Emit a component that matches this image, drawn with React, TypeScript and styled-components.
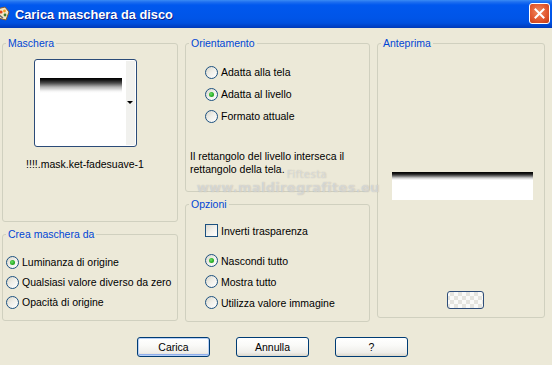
import React from 'react';
import styled, { createGlobalStyle } from 'styled-components';

const GlobalStyle = createGlobalStyle`
  html, body { margin: 0; padding: 0; }
  body {
    width: 552px; height: 365px; overflow: hidden; background: #ECE9D8;
    font-family: "Liberation Sans", Arial, sans-serif; font-size: 10.5px; color: #000;
  }
`;

const Window = styled.div`
  position: relative;
  width: 552px; height: 365px; overflow: hidden;
  display: flex; flex-direction: column;
  background: #ECE9D8;
`;

const TitleBar = styled.div`
  flex: none; height: 28px;
  display: flex; align-items: center;
  background: linear-gradient(180deg, #3A8CF5 0px, #1E6FF0 2px, #0058EE 5px, #0055E8 18px, #0050DF 23px, #0042C8 26px, #003AB8 28px);
`;

const TitleIcon = styled.svg`
  flex: none; width: 16px; height: 16px; margin-left: -5px;
`;

const TitleText = styled.span`
  margin-left: 4px;
  font-family: "Liberation Sans", Arial, sans-serif;
  font-weight: bold; font-size: 12.8px; color: #fff;
  text-shadow: 1px 1px 0 #0A1E8C;
`;

const CloseButton = styled.div`
  flex: none; margin-left: auto; margin-right: 2px; margin-top: -1px;
  width: 19px; height: 19px; border: 1px solid #fff; border-radius: 3px;
  background: radial-gradient(circle at 45% 40%, #F08A60 0%, #E2582F 55%, #C23A14 100%);
  display: flex; align-items: center; justify-content: center;
`;

const Body = styled.div`
  flex: 1;
  display: flex; flex-direction: column;
  padding: 9px 0 0 2px;
`;

const Columns = styled.div`
  display: grid;
  grid-template-columns: 176px 185px 168px;
  column-gap: 7px;
  align-items: start;
`;

const Column = styled.div`
  display: flex; flex-direction: column; gap: 6px;
`;

const Group = styled.fieldset<{ $h: number }>`
  margin: 0; padding: 0; min-width: 0;
  height: ${p => p.$h}px; box-sizing: border-box;
  border: 1px solid #D0D0BF; border-radius: 3px;
  display: flex; flex-direction: column;
`;

const Legend = styled.legend`
  margin-left: 3px; padding: 0 2px;
  line-height: 12px; font-size: 10.5px; color: #0046D5;
`;

const MaskContent = styled.div`
  display: flex; flex-direction: column; align-items: center;
  padding: 10px 10px 0 0;
`;

const Thumb = styled.div`
  width: 101px; height: 86px;
  border: 1px solid #2B4B78; border-radius: 3px;
  background: #fff;
  display: flex; align-items: flex-start;
`;

const ThumbImage = styled.div`
  flex: 1; display: flex; padding: 18px 4px 0 5px;
`;

const Fade = styled.div<{ $h: number }>`
  flex: 1; height: ${p => p.$h}px;
  background: linear-gradient(180deg, #000 0px, #141414 2px, #4a4a4a 5px, #b4b4b4 9px, #f4f4f4 13px, #fff 100%);
`;

const ThumbStrip = styled.div`
  flex: none; width: 9px; height: 84px; margin: 1px 1px 0 0;
  background: #F1F1EE;
  display: flex; align-items: flex-start; justify-content: center;
  padding-top: 40px; box-sizing: border-box;
`;

const Arrow = styled.div`
  width: 0; height: 0;
  border-left: 3px solid transparent; border-right: 3px solid transparent;
  border-top: 3px solid #000;
`;

const MaskName = styled.div`
  margin-top: 11px; line-height: 12px;
`;

const Options = styled.div<{ $pt: number; $pl: number }>`
  display: flex; flex-direction: column;
  padding: ${p => p.$pt}px 0 0 ${p => p.$pl}px;
`;

const Row = styled.div<{ $h: number }>`
  height: ${p => p.$h}px;
  display: flex; align-items: center; gap: 3px;
  white-space: nowrap;
`;

const Radio = styled.span<{ $on?: boolean }>`
  flex: none; width: 11px; height: 11px; border-radius: 50%;
  border: 1px solid #1C5180;
  background: linear-gradient(135deg, #D8D5C9 0%, #EFEEE8 45%, #FFFFFF 100%);
  display: flex; align-items: center; justify-content: center;
  &::after {
    content: "";
    display: ${p => (p.$on ? 'block' : 'none')};
    width: 5px; height: 5px; border-radius: 50%;
    background: radial-gradient(circle at 40% 40%, #6FE06A 0%, #2DB22A 50%, #178A15 100%);
  }
`;

const Check = styled.span`
  flex: none; width: 11px; height: 11px;
  border: 1px solid #1C5180;
  background: linear-gradient(135deg, #DCDAD0 0%, #F2F1EC 50%, #FFFFFF 100%);
`;

const Note = styled.div`
  margin: 23px 0 0 4px; line-height: 13px;
`;

const Spacer = styled.div<{ $h: number }>`
  height: ${p => p.$h}px; flex: none;
`;

const PreviewContent = styled.div`
  display: flex; flex-direction: column; align-items: center;
  padding: 123px 0 0 2px;
`;

const PreviewImage = styled.div`
  width: 141px; height: 28px;
  background: linear-gradient(180deg, #000 0px, #1c1c1c 2px, #6e6e6e 4px, #d0d0d0 6px, #fff 8px, #fff 100%);
`;

const TransparencyButton = styled.div`
  margin-top: 91px; margin-left: 6px;
  width: 35px; height: 16px;
  border: 1px solid #2F4E7A; border-radius: 3px;
  background-color: #F4F3EE;
  background-image: repeating-conic-gradient(#E6E5DF 0 25%, #FBFBF8 0 50%);
  background-size: 8px 8px;
  background-position: 10px 4px;
`;

const ButtonRow = styled.div`
  display: flex; gap: 26px;
  margin-top: 15px; padding-left: 135px;
`;

const Button = styled.div<{ $default?: boolean }>`
  width: 71px; height: 18px;
  border: 1px solid #003C74; border-radius: 3px;
  background: linear-gradient(180deg, #FFFFFF 0%, #FAFAF8 40%, #EFEEEA 80%, #DCD8CC 100%);
  box-shadow: ${p => (p.$default ? 'inset 0 0 0 1px #B7D0F6, inset 0 -2px 0 0 #8FAEEB' : 'none')};
  display: flex; align-items: center; justify-content: center;
  font-size: 10.5px;
`;

const Watermark = styled.div`
  position: absolute; left: 197px; top: 169px;
  width: 176px;
  font-family: "DejaVu Sans", sans-serif;
  color: rgba(255, 255, 255, 0.45);
  text-shadow: 0 0 1px rgba(130, 130, 130, 0.55);
  pointer-events: none;
`;

const WmTop = styled.div`
  padding-left: 90px; font-size: 10px; line-height: 11px; letter-spacing: 0.5px;
`;

const WmUrl = styled.div`
  font-size: 13px; line-height: 15px; font-weight: bold; letter-spacing: 0.3px;
`;

export default function App() {
  return (
    <>
      <GlobalStyle />
      <Window>
        <TitleBar>
          <TitleIcon viewBox="0 0 16 16">
            <path d="M2 3 L10 1 L14 6 L11 14 L3 12 Z" fill="#F3E7C9" stroke="#8A5A2A" strokeWidth="1" />
            <circle cx="6" cy="6" r="1.6" fill="#E2401C" />
            <circle cx="9.5" cy="5" r="1.4" fill="#F3A020" />
            <circle cx="10" cy="9" r="1.4" fill="#3C7A2E" />
            <path d="M4 9 L8 12" stroke="#6C6C6C" strokeWidth="1.5" />
          </TitleIcon>
          <TitleText>Carica maschera da disco</TitleText>
          <CloseButton>
            <svg width="11" height="11" viewBox="0 0 11 11">
              <path d="M1.5 1.5 L9.5 9.5 M9.5 1.5 L1.5 9.5" stroke="#fff" strokeWidth="2" strokeLinecap="square" />
            </svg>
          </CloseButton>
        </TitleBar>
        <Body>
          <Columns>
            <Column>
              <Group $h={185}>
                <Legend>Maschera</Legend>
                <MaskContent>
                  <Thumb>
                    <ThumbImage>
                      <Fade $h={15} />
                    </ThumbImage>
                    <ThumbStrip>
                      <Arrow />
                    </ThumbStrip>
                  </Thumb>
                  <MaskName>!!!!.mask.ket-fadesuave-1</MaskName>
                </MaskContent>
              </Group>
              <Group $h={93}>
                <Legend>Crea maschera da</Legend>
                <Options $pt={12} $pl={3}>
                  <Row $h={20}><Radio $on />Luminanza di origine</Row>
                  <Row $h={20}><Radio />Qualsiasi valore diverso da zero</Row>
                  <Row $h={20}><Radio />Opacità di origine</Row>
                </Options>
              </Group>
            </Column>
            <Column>
              <Group $h={155}>
                <Legend>Orientamento</Legend>
                <Options $pt={12} $pl={19}>
                  <Row $h={22}><Radio />Adatta alla tela</Row>
                  <Row $h={22}><Radio $on />Adatta al livello</Row>
                  <Row $h={22}><Radio />Formato attuale</Row>
                </Options>
                <Note>
                  Il rettangolo del livello interseca il<br />
                  rettangolo della tela.
                </Note>
              </Group>
              <Group $h={124}>
                <Legend>Opzioni</Legend>
                <Options $pt={10} $pl={19}>
                  <Row $h={21}><Check />Inverti trasparenza</Row>
                  <Spacer $h={9} />
                  <Row $h={21}><Radio $on />Nascondi tutto</Row>
                  <Row $h={21}><Radio />Mostra tutto</Row>
                  <Row $h={21}><Radio />Utilizza valore immagine</Row>
                </Options>
              </Group>
            </Column>
            <Column>
              <Group $h={281}>
                <Legend>Anteprima</Legend>
                <PreviewContent>
                  <PreviewImage />
                  <TransparencyButton />
                </PreviewContent>
              </Group>
            </Column>
          </Columns>
          <ButtonRow>
            <Button $default>Carica</Button>
            <Button>Annulla</Button>
            <Button>?</Button>
          </ButtonRow>
        </Body>
        <Watermark>
          <WmTop>Fiftesta</WmTop>
          <WmUrl>www.maldiregrafites.eu</WmUrl>
        </Watermark>
      </Window>
    </>
  );
}
